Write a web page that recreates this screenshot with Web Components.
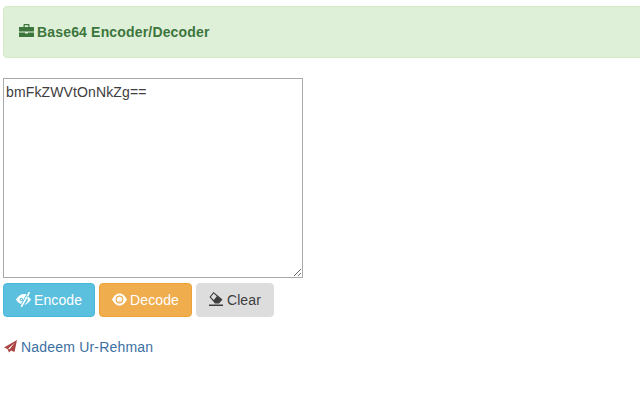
<!DOCTYPE html>
<html>
<head>
<meta charset="utf-8">
<title>Base64 Encoder/Decoder</title>
<style>
  html, body { margin: 0; padding: 0; background: #fff; }
  body {
    font-family: "Liberation Sans", Arial, sans-serif;
    font-size: 14px;
    color: #333;
    overflow: hidden;
    height: 400px;
  }
  b64-page { padding: 6px 0 0 3px; }
</style>
</head>
<body>
<b64-page>
  <b64-alert>Base64 Encoder/Decoder</b64-alert>
  <b64-form value="bmFkZWVtOnNkZg=="></b64-form>
  <b64-credit href="#">Nadeem Ur-Rehman</b64-credit>
</b64-page>

<script>
// glyphs are drawn on a 15x14 box, a few overflow it a little
const ICONS = {
  briefcase: 'M4.500 2V0c0-.6.4-1 1-1h4c.6 0 1 .4 1 1v2H15v4.500H0V2zM5.700.2V2h3.600V.2zM0 7.500h6v1h3v-1h6V12H0z',
  eyeClose: 'M12.800-1.200L14.200-.4 6 14.200 4.600 13.400zM0 6.500C2 3 5 1 8 1c.8 0 1.600.1 2.400.2L4.900 11C2.800 10 1.200 8.500 0 6.500zM5.300 4.700a1.800 1.800 0 1 0 0 3.600a1.800 1.800 0 1 0 0-3.600zM5.300 5.700a.8.8 0 1 1 0 1.600a.8.8 0 1 1 0-1.600zM11 3c1.600.8 3 2 4 3.500-1.500 2.500-4 4.500-6.500 5.500l1-1.500c1.400-1 2.300-2.400 2.300-4 0-1-.3-2-1.300-2.700z',
  eyeOpen: 'M0 6.500C2.500 2 5 .5 7.500.5S12.500 2 15 6.500C12.500 11 10 12.500 7.500 12.500S2.500 11 0 6.500zM7.500 2.600a3.900 3.900 0 1 0 0 7.800a3.900 3.900 0 1 0 0-7.800zM7.500 3.800a2.700 2.700 0 1 1 0 5.400a2.700 2.700 0 1 1 0-5.400zM5.600 6.500a1.900 1.900 0 0 0 3.800 0a1.900 1.400 0 0 1-3.800 0z',
  erase: 'M4.500-1L13.500 6.500 10 10.500H6L.5 4zM4.600.4L1.900 4 4.800 7 7.800 3.300zM0 11.500h14V13H0z',
  send: 'M14 0L1 7.500 4.500 9 6 12.500 8 10.500 11.500 12zM12 2.500L5.200 8.600 6.400 9.400z'
};

class B64Icon extends HTMLElement {
  connectedCallback() {
    this.attachShadow({ mode: 'open' });
    this.shadowRoot.innerHTML = `
      <style>
        :host { display: inline-flex; align-items: center; }
        svg { display: block; overflow: visible; }
      </style>
      <svg viewBox="0 0 15 14" width="15" height="14">
        <path fill="currentColor" fill-rule="evenodd" d="${ICONS[this.getAttribute('name')]}"/>
      </svg>
    `;
  }
}

class B64Alert extends HTMLElement {
  connectedCallback() {
    this.attachShadow({ mode: 'open' });
    this.shadowRoot.innerHTML = `
      <style>
        :host {
          display: flex;
          align-items: center;
          gap: 3px;
          box-sizing: border-box;
          height: 52px;
          width: 660px;
          padding: 0 15px;
          margin-bottom: 20px;
          background: #dff0d8;
          border: 1px solid #d6e9c6;
          border-radius: 4px;
          color: #3c763d;
          font-weight: bold;
          letter-spacing: 0.17px;
        }
      </style>
      <b64-icon name="briefcase"></b64-icon>
      <slot></slot>
    `;
  }
}

class B64Button extends HTMLElement {
  connectedCallback() {
    this.attachShadow({ mode: 'open' });
    this.shadowRoot.innerHTML = `
      <style>
        :host {
          display: inline-flex;
          align-items: center;
          gap: 3px;
          box-sizing: border-box;
          height: 34px;
          padding: 0 12px;
          border: 1px solid transparent;
          border-radius: 4px;
          background: var(--bg);
          border-color: var(--line);
          color: var(--fg, #fff);
          font-size: 14px;
          letter-spacing: 0.1px;
        }
      </style>
      <b64-icon name="${this.getAttribute('icon')}"></b64-icon>
      <slot></slot>
    `;
  }
}

class B64Form extends HTMLElement {
  connectedCallback() {
    this.attachShadow({ mode: 'open' });
    this.shadowRoot.innerHTML = `
      <style>
        :host { display: block; }
        textarea {
          display: block;
          box-sizing: border-box;
          width: 300px;
          height: 200px;
          margin: 0 0 5px;
          padding: 5px 2px 2px;
          border: 1px solid #a9a9a9;
          border-radius: 0;
          background: #fff;
          color: #3d3d3d;
          font: 14px/16px "Liberation Sans", Arial, sans-serif;
          letter-spacing: 0.13px;
          outline: none;
        }
        .actions { display: flex; gap: 4px; }
        .encode { --bg: #5bc0de; --line: #46b8da; }
        .decode { --bg: #f0ad4e; --line: #eea236; }
        .clear { --bg: #ddd; --line: #ddd; --fg: #3d3d3d; }
      </style>
      <textarea spellcheck="false"></textarea>
      <div class="actions">
        <b64-button class="encode" icon="eyeClose">Encode</b64-button>
        <b64-button class="decode" icon="eyeOpen">Decode</b64-button>
        <b64-button class="clear" icon="erase">Clear</b64-button>
      </div>
    `;
    this.shadowRoot.querySelector('textarea').value = this.getAttribute('value');
  }
}

class B64Credit extends HTMLElement {
  connectedCallback() {
    this.attachShadow({ mode: 'open' });
    this.shadowRoot.innerHTML = `
      <style>
        :host {
          display: flex;
          align-items: center;
          gap: 3px;
          margin-top: 20px;
          height: 20px;
          color: #a94442;
        }
        a { color: #3d70a3; text-decoration: none; letter-spacing: 0.19px; }
      </style>
      <b64-icon name="send"></b64-icon>
      <a href="${this.getAttribute('href')}"><slot></slot></a>
    `;
  }
}

class B64Page extends HTMLElement {
  connectedCallback() {
    this.attachShadow({ mode: 'open' });
    this.shadowRoot.innerHTML = `
      <style>
        :host { display: block; }
      </style>
      <slot></slot>
    `;
  }
}

customElements.define('b64-icon', B64Icon);
customElements.define('b64-alert', B64Alert);
customElements.define('b64-button', B64Button);
customElements.define('b64-form', B64Form);
customElements.define('b64-credit', B64Credit);
customElements.define('b64-page', B64Page);
</script>
</body>
</html>
